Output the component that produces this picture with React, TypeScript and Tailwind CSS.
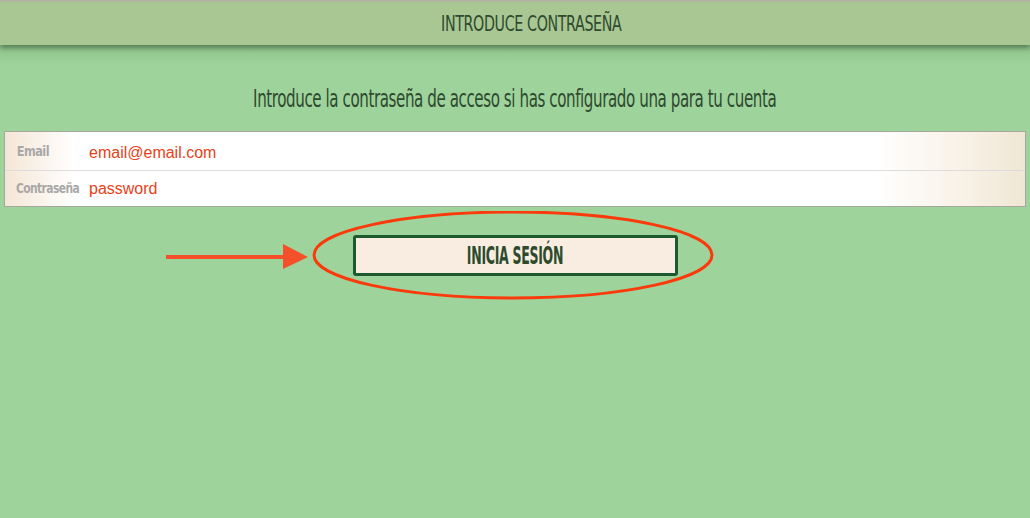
const condensed = { fontFamily: '"Liberation Sans Narrow", "DejaVu Sans Condensed", sans-serif' };
const arial = { fontFamily: '"Liberation Sans", Arial, sans-serif' };

export default function App() {
  return (
    <div className="relative w-[1030px] h-[518px] overflow-hidden bg-[#9ed49c]" style={condensed}>
      <header className="relative z-10 h-[45px] border-t-2 border-[#b3b3a3] bg-[#a9c792] flex items-center justify-center pl-[32px] shadow-[0_3px_5px_rgba(40,70,40,0.55)]">
        <h1 className="text-[22px] tracking-[-0.5px] text-[#2f4a2f] scale-x-[0.72] whitespace-nowrap">INTRODUCE CONTRASEÑA</h1>
      </header>
      <div className="h-[20px] bg-gradient-to-b from-[#8fc28c] to-[#9ed49c]" />

      <main className="flex flex-col items-center">
        <p className="mt-[19px] text-[24px] leading-[30px] tracking-[-0.6px] text-[#2f4a2f] scale-x-[0.7] whitespace-nowrap">
          Introduce la contraseña de acceso si has configurado una para tu cuenta
        </p>

        <div className="mt-[17px] w-[1022px] border border-[#a7a79c] bg-[linear-gradient(to_right,#f5e6d6_0px,#ffffff_70px,#ffffff_870px,#f8f1e6_960px,#efe6d3_1022px)]">
          <div className="flex items-center h-[39px] border-b border-[#dcdcdc]">
            <span className="w-[84px] pl-[13px] text-[14px] font-semibold tracking-[-0.6px] text-[#a8a8a8] scale-x-[0.9] origin-left">Email</span>
            <span className="mt-[3px] text-[16px] text-[#e84117]" style={arial}>email@email.com</span>
          </div>
          <div className="flex items-center h-[35px]">
            <span className="w-[84px] pl-[13px] text-[14px] font-semibold tracking-[-0.7px] text-[#a8a8a8] whitespace-nowrap scale-x-[0.85] origin-left">Contraseña</span>
            <span className="text-[16px] text-[#e84117]" style={arial}>password</span>
          </div>
        </div>

        <div className="relative mt-[28px]">
          <button className="w-[325px] h-[41px] rounded-[3px] border-[3px] border-[#1d5a30] bg-[#f8ede0] text-[24px] font-bold text-[#2d4a2d]">
            <span className="inline-block scale-x-[0.58] tracking-[-0.5px] whitespace-nowrap">INICIA SESIÓN</span>
          </button>
          <svg className="absolute left-[-187px] top-[-24px] pointer-events-none" width="600" height="92" viewBox="0 0 600 92">
            <line x1="0" y1="46" x2="120" y2="46" stroke="#f4502a" strokeWidth="4" />
            <polygon points="117,33 142,46 117,58" fill="#f4502a" />
            <ellipse cx="347" cy="44" rx="199" ry="43" fill="none" stroke="#fb3a0c" strokeWidth="3" />
          </svg>
        </div>
      </main>
    </div>
  );
}
